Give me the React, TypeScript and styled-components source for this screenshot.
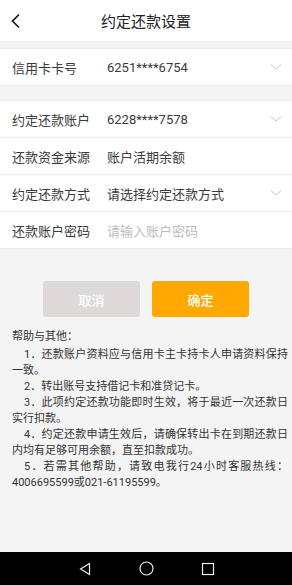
import styled, { createGlobalStyle } from "styled-components";

const GlobalStyle = createGlobalStyle`
  html, body {
    margin: 0;
    padding: 0;
    background: #f4f4f4;
  }
  body {
    font-family: Roboto, "Noto Sans CJK SC", sans-serif;
    color: #333;
  }
`;

const Page = styled.div`
  display: flex;
  flex-direction: column;
  min-height: 100vh;
  background: #f4f4f4;
`;

const Header = styled.header`
  position: relative;
  height: 41px;
  display: flex;
  align-items: center;
  justify-content: center;
  background: white;
  margin-bottom: 7px;
`;

const BackButton = styled.span`
  position: absolute;
  left: 10px;
  top: 13px;
  display: flex;
`;

const Title = styled.h1`
  margin: 0;
  font-size: 15px;
  font-weight: 400;
  color: #222;
`;

const Group = styled.div<{ $gap?: number }>`
  background: white;
  border-top: 1px solid #ececec;
  border-bottom: 1px solid #ececec;
  margin-bottom: ${(p) => p.$gap ?? 0}px;
`;

const Row = styled.div`
  position: relative;
  height: 36px;
  display: flex;
  align-items: center;
  padding: 0 10px 0 12px;
  font-size: 13px;
  & + & {
    border-top: 1px solid #ececec;
  }
`;

const Label = styled.span`
  width: 95px;
  color: #3a3a3a;
`;

const Value = styled.span<{ $placeholder?: boolean }>`
  flex: 1;
  color: ${(p) => (p.$placeholder ? "#bdbdbd" : "#3a3a3a")};
`;

const Buttons = styled.div`
  display: flex;
  justify-content: center;
  gap: 12px;
  margin-top: 32px;
`;

const Button = styled.button<{ $primary?: boolean }>`
  width: 97px;
  height: 36px;
  border: none;
  border-radius: 3px;
  font-family: inherit;
  font-size: 13px;
  font-weight: 500;
  color: white;
  background: ${(p) => (p.$primary ? "#ffa800" : "#dcd9d8")};
`;

const Help = styled.div`
  padding: 12px 4px 0 12px;
  font-size: 11px;
  line-height: 16px;
  color: #333;
`;

const HelpTitle = styled.div`
  margin-bottom: 2px;
`;

const HelpItem = styled.p`
  margin: 0;
  text-indent: 12px;
  text-align: justify;
`;

const NavBar = styled.nav`
  margin-top: auto;
  height: 33px;
  background: black;
  display: flex;
  align-items: center;
  justify-content: center;
  gap: 47px;
`;

const Chevron = () => (
  <svg width="12" height="8" viewBox="0 0 12 8">
    <path d="M1 1.5 L6 6 L11 1.5" fill="none" stroke="#c8c8c8" strokeWidth="1" />
  </svg>
);

const rows = [
  { label: "约定还款账户", value: "6228****7578", chevron: true },
  { label: "还款资金来源", value: "账户活期余额" },
  { label: "约定还款方式", value: "请选择约定还款方式", chevron: true },
  { label: "还款账户密码", value: "请输入账户密码", placeholder: true },
];

const App = () => {
  return (
    <Page>
      <GlobalStyle />
      <Header>
        <BackButton>
          <svg width="12" height="16" viewBox="0 0 12 16">
            <path d="M9 1.5 L2.5 8 L9 14.5" fill="none" stroke="#111" strokeWidth="1.6" />
          </svg>
        </BackButton>
        <Title>约定还款设置</Title>
      </Header>
      <Group $gap={14}>
        <Row>
          <Label>信用卡卡号</Label>
          <Value>6251****6754</Value>
          <Chevron />
        </Row>
      </Group>
      <Group>
        {rows.map((r) => (
          <Row key={r.label}>
            <Label>{r.label}</Label>
            <Value $placeholder={r.placeholder}>{r.value}</Value>
            {r.chevron && <Chevron />}
          </Row>
        ))}
      </Group>
      <Buttons>
        <Button>取消</Button>
        <Button $primary>确定</Button>
      </Buttons>
      <Help>
        <HelpTitle>帮助与其他：</HelpTitle>
        <HelpItem>1．还款账户资料应与信用卡主卡持卡人申请资料保持一致。</HelpItem>
        <HelpItem>2．转出账号支持借记卡和准贷记卡。</HelpItem>
        <HelpItem>3．此项约定还款功能即时生效，将于最近一次还款日实行扣款。</HelpItem>
        <HelpItem>4．约定还款申请生效后，请确保转出卡在到期还款日内均有足够可用余额，直至扣款成功。</HelpItem>
        <HelpItem>5．若需其他帮助，请致电我行24小时客服热线：4006695599或021-61195599。</HelpItem>
      </Help>
      <NavBar>
        <svg width="14" height="14" viewBox="0 0 14 14">
          <path d="M11.5 1.5 L2.5 7 L11.5 12.5 Z" fill="none" stroke="#eee" strokeWidth="1.2" />
        </svg>
        <svg width="15" height="15" viewBox="0 0 15 15">
          <circle cx="7.5" cy="7.5" r="6.5" fill="none" stroke="#eee" strokeWidth="1.2" />
        </svg>
        <svg width="14" height="14" viewBox="0 0 14 14">
          <rect x="1.5" y="1.5" width="11" height="11" fill="none" stroke="#eee" strokeWidth="1.2" />
        </svg>
      </NavBar>
    </Page>
  );
};

export default App;
